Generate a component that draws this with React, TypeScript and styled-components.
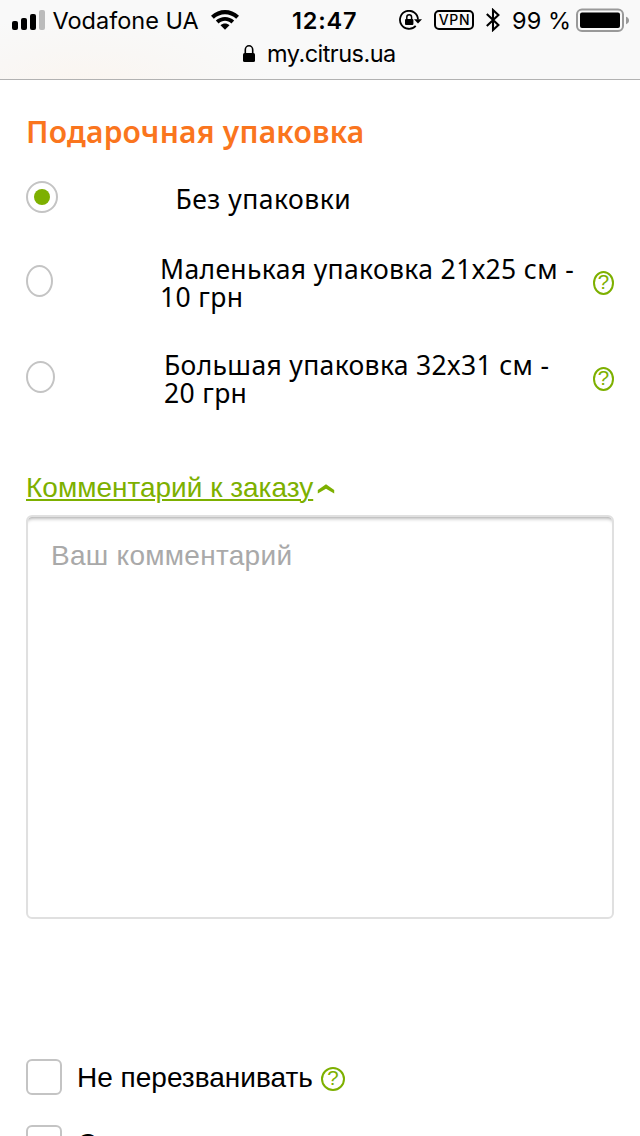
import React from "react";
import styled, { createGlobalStyle } from "styled-components";

const GREEN = "#7db000";

const GlobalStyle = createGlobalStyle`
  *, *::before, *::after { box-sizing: border-box; }
  body { margin: 0; background: #fff; color: #000; overflow: hidden; }
`;

const Screen = styled.div`
  width: 640px;
  height: 1136px;
  overflow: hidden;
  display: flex;
  flex-direction: column;
  background: #fff;
`;

const BrowserHeader = styled.header`
  height: 80px;
  flex: none;
  border-bottom: 1px solid #b2b2b2;
  background: radial-gradient(ellipse 190px 75px at 85px 90px, #fbf5ef 0%, #f9f7f5 55%, #f9f9f9 100%);
  font-family: Inter, "Liberation Sans", sans-serif;
`;

const StatusBar = styled.div`
  height: 40px;
  display: flex;
  align-items: center;
  padding-left: 12px;
  svg { display: block; flex: none; }
`;

const StatusText = styled.span<{ $width: number; $left: number; $spacing: number; $bold?: boolean }>`
  flex: none;
  width: ${(p) => p.$width}px;
  margin-left: ${(p) => p.$left}px;
  padding-top: 2px;
  font-size: 23.5px;
  line-height: 38px;
  letter-spacing: ${(p) => p.$spacing}px;
  font-weight: ${(p) => (p.$bold ? 600 : 400)};
  white-space: nowrap;
`;

const IconSlot = styled.span<{ $left: number }>`
  flex: none;
  margin-left: ${(p) => p.$left}px;
`;

const VpnBadge = styled.span`
  flex: none;
  width: 40px;
  height: 20px;
  margin-left: 12px;
  border: 2px solid #000;
  border-radius: 5px;
  font-size: 14px;
  font-weight: 500;
  line-height: 16px;
  letter-spacing: 0.7px;
  text-align: center;
  padding-left: 1px;
`;

const AddressBar = styled.div`
  height: 28px;
  display: flex;
  align-items: center;
  padding-left: 243px;
  svg { display: block; flex: none; }
`;

const Address = styled.span`
  margin-left: 12px;
  font-size: 23.5px;
  line-height: 28px;
  letter-spacing: -0.52px;
`;

const Main = styled.main`
  padding: 32px 26px 0;
`;

const Title = styled.h2`
  margin: 0 0 29px;
  color: #fa751e;
  font: 600 30px/40px "Noto Sans", sans-serif;
  letter-spacing: 0.22px;
  white-space: nowrap;
`;

const Option = styled.div<{ $height: number; $gap: number }>`
  display: flex;
  align-items: center;
  height: ${(p) => p.$height}px;
  margin-bottom: ${(p) => p.$gap}px;
`;

const Radio = styled.span<{ $width: number }>`
  flex: none;
  width: ${(p) => p.$width}px;
  height: 32px;
  border: 2px solid #c4c4c4;
  border-radius: 50%;
  display: flex;
  align-items: center;
  justify-content: center;
  margin-top: -4px;
`;

const RadioDot = styled.span`
  width: 16px;
  height: 16px;
  border-radius: 50%;
  background: ${GREEN};
`;

const OptionLabel = styled.span<{ $left: number; $spacing: number }>`
  flex: 1;
  display: flex;
  flex-direction: column;
  margin-left: ${(p) => p.$left}px;
  font: 400 26.5px/28px "Noto Sans", sans-serif;
  letter-spacing: ${(p) => p.$spacing}px;
  white-space: nowrap;
`;

const CommentToggle = styled.a`
  display: flex;
  align-items: center;
  height: 32px;
  margin-bottom: 11px;
  color: ${GREEN};
  font: 28px/32px "Liberation Sans", sans-serif;
  svg { display: block; margin: 2px 0 0 4px; }
`;

const CommentText = styled.span`
  text-decoration: underline;
  text-decoration-thickness: 2px;
  text-underline-offset: 2px;
`;

const CommentField = styled.textarea`
  display: block;
  width: 588px;
  height: 404px;
  margin: 0 0 140px;
  padding: 23px 23px;
  resize: none;
  outline: none;
  border: 2px solid #e0e0e0;
  border-radius: 6px;
  background: #fff;
  box-shadow: inset 0 5px 4px -4px rgba(0, 0, 0, 0.4);
  font: 28px/32px "Liberation Sans", sans-serif;
  &::placeholder { color: #a9a9a9; opacity: 1; letter-spacing: 0.28px; }
`;

const CheckRow = styled.div`
  display: flex;
  align-items: center;
  height: 36px;
  margin-bottom: 30px;
`;

const CheckBox = styled.span`
  flex: none;
  width: 36px;
  height: 36px;
  border: 2px solid #c4c4c4;
  border-radius: 6px;
`;

const CheckLabel = styled.span`
  width: 244px;
  margin-left: 15px;
  padding-top: 1px;
  font: 28px/32px "Liberation Sans", sans-serif;
  white-space: nowrap;
`;

const HelpBadge = styled.span<{ $width: number; $drop: number }>`
  flex: none;
  width: ${(p) => p.$width}px;
  height: 24px;
  margin-top: ${(p) => p.$drop}px;
  border: 2px solid ${GREEN};
  border-radius: 50%;
  color: ${GREEN};
  font: 20.5px/18px "Liberation Sans", sans-serif;
  display: flex;
  justify-content: center;
`;

const Help = ({ width = 24, drop = 0 }: { width?: number; drop?: number }) => (
  <HelpBadge $width={width} $drop={drop}>?</HelpBadge>
);

const Signal = () => (
  <svg width="33" height="20" viewBox="0 0 33 20">
    <rect x="0" y="11" width="6" height="9" rx="2" />
    <rect x="9" y="8" width="6" height="12" rx="2" />
    <rect x="18" y="4" width="6" height="16" rx="2" />
    <rect x="27" y="0" width="6" height="20" rx="2" fill="#bbb" />
  </svg>
);

const Wifi = () => (
  <svg width="28" height="20" viewBox="0 0 28 20">
    <path d="M0 5.8C8-1.9 20-1.9 28 5.8L25.2 8.7C18.8 2.6 9.2 2.6 2.8 8.7Z" />
    <path d="M4.8 10.6C10 5.7 18 5.7 23.2 10.6L20.4 13.4C16.8 10 11.2 10 7.6 13.4Z" />
    <path d="M9.5 15.2C12 12.9 16 12.9 18.5 15.2L14 19.8Z" />
  </svg>
);

const RotationLock = () => (
  <svg width="23" height="20" viewBox="0 0 23 20">
    <path d="M16.7 15.8A9 9 0 1 1 19 9.5" fill="none" stroke="#000" strokeWidth="1.8" />
    <path d="M15 9.2H23L19 13.5Z" />
    <rect x="6" y="9" width="8.4" height="6" rx="1" />
    <path d="M7.8 9V7.2a2.4 2.4 0 0 1 4.8 0V9" fill="none" stroke="#000" strokeWidth="1.5" />
  </svg>
);

const Bluetooth = () => (
  <svg width="14" height="24" viewBox="0 0 14 24">
    <path d="M0.8 6L12.4 17L7 22V2L12.4 7L0.8 18" fill="none" stroke="#000" strokeWidth="2.1" />
  </svg>
);

const Battery = () => (
  <svg width="54" height="24" viewBox="0 0 54 24">
    <rect x="1" y="1.5" width="46" height="21.5" rx="5" fill="none" stroke="#999" strokeWidth="2" />
    <rect x="4" y="4.5" width="40" height="15.5" rx="2" />
    <path d="M50 8.8Q53 9.8 53 12.5T50 16.2Z" fill="#999" />
  </svg>
);

const Padlock = () => (
  <svg width="12" height="18" viewBox="0 0 12 18">
    <rect x="0" y="8" width="12" height="9" rx="1.5" />
    <path d="M2.3 8.5V4.7a3.7 3.9 0 0 1 7.4 0V8.5" fill="none" stroke="#000" strokeWidth="1.6" />
  </svg>
);

const Chevron = () => (
  <svg width="18" height="10" viewBox="0 0 18 10">
    <path d="M0.8 6L9 0.2L17.2 6V9.6L9 4.8L0.8 9.6Z" fill={GREEN} />
  </svg>
);

export default function App() {
  return (
    <Screen>
      <GlobalStyle />
      <BrowserHeader>
        <StatusBar>
          <Signal />
          <StatusText $width={146.5} $left={7.5} $spacing={0}>Vodafone UA</StatusText>
          <IconSlot $left={12}><Wifi /></IconSlot>
          <StatusText $width={66} $left={53} $spacing={0.8} $bold>12:47</StatusText>
          <IconSlot $left={41}><RotationLock /></IconSlot>
          <VpnBadge>VPN</VpnBadge>
          <IconSlot $left={12}><Bluetooth /></IconSlot>
          <StatusText $width={64} $left={12} $spacing={0.1}>99 %</StatusText>
          <Battery />
        </StatusBar>
        <AddressBar>
          <Padlock />
          <Address>my.citrus.ua</Address>
        </AddressBar>
      </BrowserHeader>
      <Main>
        <Title>Подарочная упаковка</Title>
        <Option $height={36} $gap={38}>
          <Radio $width={32}><RadioDot /></Radio>
          <OptionLabel $left={117.5} $spacing={0.5}>Без упаковки</OptionLabel>
        </Option>
        <Option $height={56} $gap={40}>
          <Radio $width={27} />
          <OptionLabel $left={107} $spacing={0.36}>
            <span>Маленькая упаковка 21х25 см -</span>
            <span>10 грн</span>
          </OptionLabel>
          <Help width={21} />
        </Option>
        <Option $height={56} $gap={65}>
          <Radio $width={29} />
          <OptionLabel $left={109} $spacing={0.34}>
            <span>Большая упаковка 32х31 см -</span>
            <span>20 грн</span>
          </OptionLabel>
          <Help width={21} />
        </Option>
        <CommentToggle>
          <CommentText>Комментарий к заказу</CommentText>
          <Chevron />
        </CommentToggle>
        <CommentField placeholder="Ваш комментарий" />
        <CheckRow>
          <CheckBox />
          <CheckLabel>Не перезванивать</CheckLabel>
          <Help drop={4} />
        </CheckRow>
        <CheckRow>
          <CheckBox />
          <CheckLabel>С</CheckLabel>
        </CheckRow>
      </Main>
    </Screen>
  );
}
